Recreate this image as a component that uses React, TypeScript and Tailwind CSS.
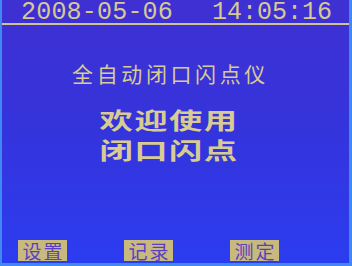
export default function App() {
  const mono = { fontFamily: '"Liberation Mono", "DejaVu Sans Mono", monospace' };
  const cjk = { fontFamily: '"Noto Sans CJK SC", "Noto Sans", sans-serif' };

  return (
    <div className="w-[352px] h-[266px] overflow-hidden bg-gradient-to-b from-[#3f30d2] via-[#3434dc] to-[#2b3cf0] border-l-2 border-r-[3px] border-b-[3px] border-[#3f8af2] flex flex-col">
      {/* Status bar */}
      <div className="h-[25px] border-b-2 border-[#d2c48e] flex">
        <div className="flex pt-[2px] pl-[19px] text-[25px] leading-[21px] text-[#d6c991] whitespace-nowrap" style={mono}>
          <span className="w-[191px] tracking-[0.2px]">2008-05-06</span>
          <span>14:05:16</span>
        </div>
      </div>

      {/* Title */}
      <div className="flex flex-col items-center pr-[14px] text-[#d8cb94] whitespace-nowrap" style={cjk}>
        <div className="mt-[36px] text-[21px] leading-[24px] tracking-[3.6px] pl-[4px]">全自动闭口闪点仪</div>
        <div className="mt-[19px] text-[23px] leading-[30px] font-bold tracking-[1px] scale-x-[1.45]">欢迎使用</div>
        <div className="text-[23px] leading-[30px] font-bold tracking-[1px] scale-x-[1.45]">闭口闪点</div>
      </div>

      {/* Bottom menu */}
      <div className="mt-auto mb-[2px] flex pl-[16px] gap-[57px]" style={cjk}>
        {["设置", "记录", "测定"].map((label) => (
          <div
            key={label}
            className="w-[49px] h-[21px] bg-[#c8b97f] text-[#5a3fc4] text-[19px] leading-[21px] tracking-[2px] pl-[2px] flex items-center justify-center whitespace-nowrap"
          >
            {label}
          </div>
        ))}
      </div>
    </div>
  );
}
